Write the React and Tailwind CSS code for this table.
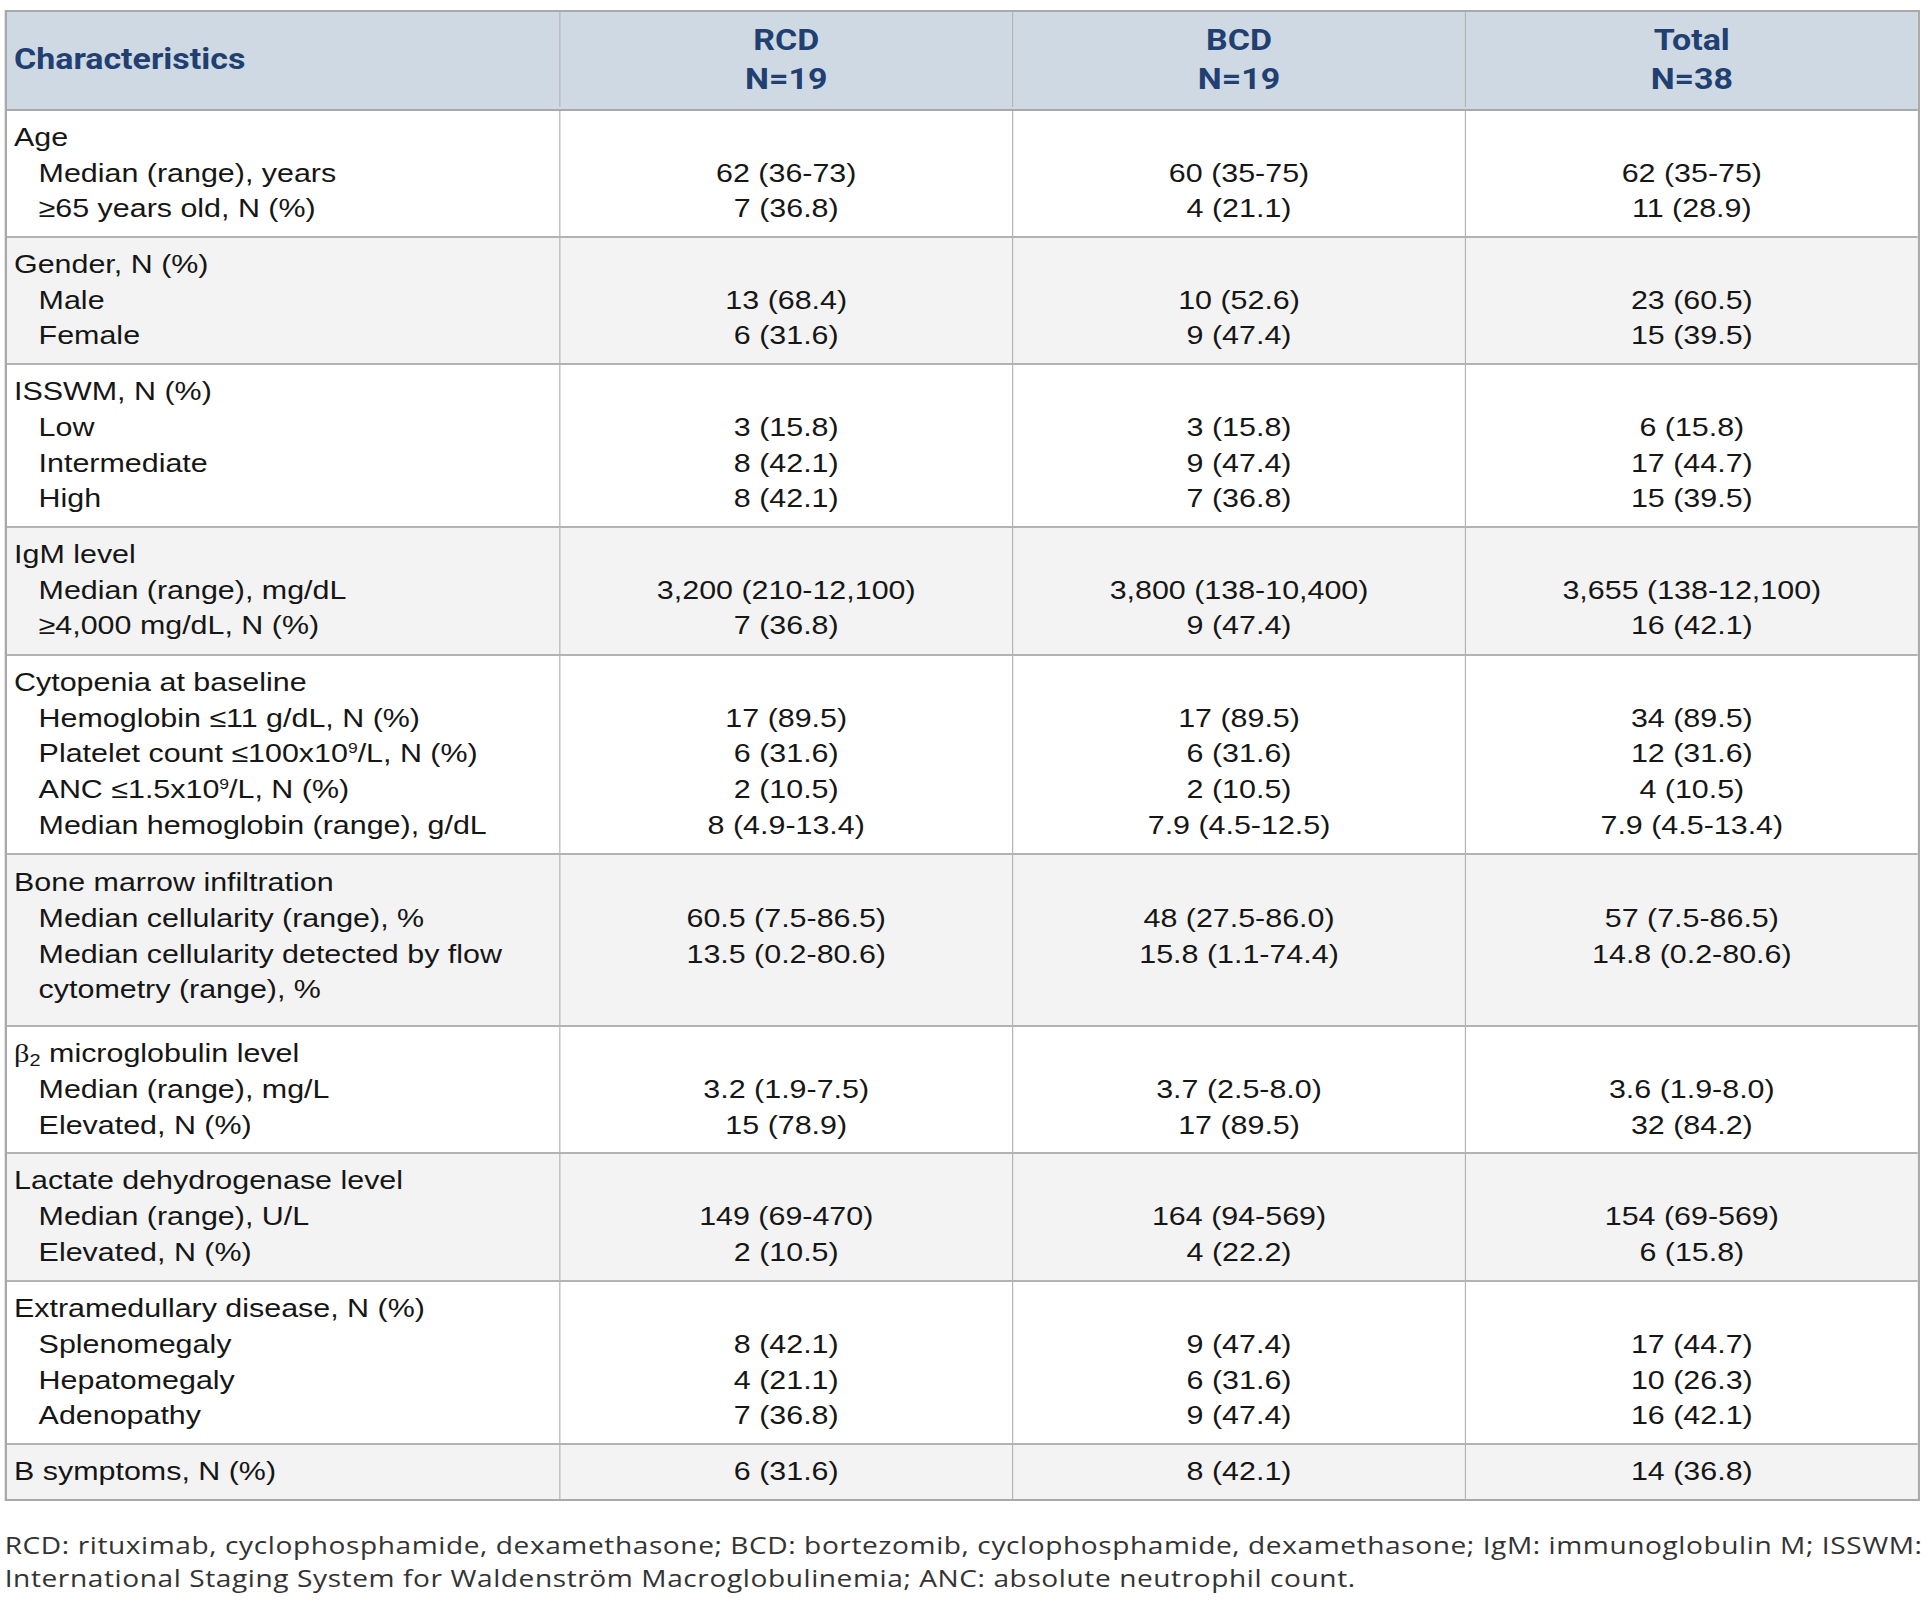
import React from "react";

const sup9 = <sup className="text-[15px] -top-[0.6em]">9</sup>;

const rows = [
  {
    label: "Age",
    sub: [
      ["Median (range), years", "62 (36-73)", "60 (35-75)", "62 (35-75)"],
      ["≥65 years old, N (%)", "7 (36.8)", "4 (21.1)", "11 (28.9)"],
    ],
  },
  {
    label: "Gender, N (%)",
    sub: [
      ["Male", "13 (68.4)", "10 (52.6)", "23 (60.5)"],
      ["Female", "6 (31.6)", "9 (47.4)", "15 (39.5)"],
    ],
  },
  {
    label: "ISSWM, N (%)",
    sub: [
      ["Low", "3 (15.8)", "3 (15.8)", "6 (15.8)"],
      ["Intermediate", "8 (42.1)", "9 (47.4)", "17 (44.7)"],
      ["High", "8 (42.1)", "7 (36.8)", "15 (39.5)"],
    ],
  },
  {
    label: "IgM level",
    big: true,
    sub: [
      ["Median (range), mg/dL", "3,200 (210-12,100)", "3,800 (138-10,400)", "3,655 (138-12,100)"],
      ["≥4,000 mg/dL, N (%)", "7 (36.8)", "9 (47.4)", "16 (42.1)"],
    ],
  },
  {
    label: "Cytopenia at baseline",
    big: true,
    sub: [
      ["Hemoglobin ≤11 g/dL, N (%)", "17 (89.5)", "17 (89.5)", "34 (89.5)"],
      [<>Platelet count ≤100x10{sup9}/L, N (%)</>, "6 (31.6)", "6 (31.6)", "12 (31.6)"],
      [<>ANC ≤1.5x10{sup9}/L, N (%)</>, "2 (10.5)", "2 (10.5)", "4 (10.5)"],
      ["Median hemoglobin (range), g/dL", "8 (4.9-13.4)", "7.9 (4.5-12.5)", "7.9 (4.5-13.4)"],
    ],
  },
  {
    label: "Bone marrow infiltration",
    extra: true,
    sub: [
      ["Median cellularity (range), %", "60.5 (7.5-86.5)", "48 (27.5-86.0)", "57 (7.5-86.5)"],
      ["Median cellularity detected by flow", "13.5 (0.2-80.6)", "15.8 (1.1-74.4)", "14.8 (0.2-80.6)"],
      ["cytometry (range), %", "", "", ""],
    ],
  },
  {
    label: (
      <>
        <span className="font-['Liberation_Serif',serif]">β</span>
        <sub className="text-[17px]">2</sub> microglobulin level
      </>
    ),
    sub: [
      ["Median (range), mg/L", "3.2 (1.9-7.5)", "3.7 (2.5-8.0)", "3.6 (1.9-8.0)"],
      ["Elevated, N (%)", "15 (78.9)", "17 (89.5)", "32 (84.2)"],
    ],
  },
  {
    label: "Lactate dehydrogenase level",
    big: true,
    sub: [
      ["Median (range), U/L", "149 (69-470)", "164 (94-569)", "154 (69-569)"],
      ["Elevated, N (%)", "2 (10.5)", "4 (22.2)", "6 (15.8)"],
    ],
  },
  {
    label: "Extramedullary disease, N (%)",
    sub: [
      ["Splenomegaly", "8 (42.1)", "9 (47.4)", "17 (44.7)"],
      ["Hepatomegaly", "4 (21.1)", "6 (31.6)", "10 (26.3)"],
      ["Adenopathy", "7 (36.8)", "9 (47.4)", "16 (42.1)"],
    ],
  },
  {
    label: "B symptoms, N (%)",
    values: ["6 (31.6)", "8 (42.1)", "14 (36.8)"],
  },
];

function Line({ children }) {
  return <div className="h-[35.7px] leading-[35.7px] whitespace-nowrap">{children}</div>;
}

function BodyRow({ row, index }) {
  const shaded = index % 2 === 1;
  const bg = shaded ? "bg-[#f3f3f3]" : "bg-white";
  const border = index === 0 ? "" : "border-t-2 border-[#b3b3b3]";
  const pad = row.extra ? "pt-[10px] pb-[17px]" : row.big ? "pt-[9px] pb-[10px]" : "py-[9px]";
  return (
    <div className={`grid grid-cols-[472px_387px_387px_1fr] ${bg} ${border}`}>
      <div className={`pl-[6px] ${pad}`}>
        <Line>{row.label}</Line>
        {row.sub &&
          row.sub.map((s, i) => (
            <Line key={i}>
              <span className="pl-[21px]">{s[0]}</span>
            </Line>
          ))}
      </div>
      {[1, 2, 3].map((c) => (
        <div key={c} className={`border-l border-[#b3b3b3] text-center ${pad}`}>
          {row.values ? (
            <Line>{row.values[c - 1]}</Line>
          ) : (
            <>
              <Line />
              {row.sub.map((s, i) => (
                <Line key={i}>{s[c]}</Line>
              ))}
            </>
          )}
        </div>
      ))}
    </div>
  );
}

export default function App() {
  return (
    <div className="w-[1649px] origin-top-left scale-x-[1.17] bg-white pt-[10px] pb-[30px]">
      <div className="ml-[4px] w-[1637px] border-2 border-[#a9a9a9] font-['Liberation_Sans',Arial,sans-serif] text-[26px] text-[#161616]">
        <div className="grid grid-cols-[472px_387px_387px_1fr] h-[99px] pb-[2px] bg-[#cfd9e4] border-b-2 border-[#a9a9a9] font-['Roboto',sans-serif] font-bold text-[29px] leading-[38.5px] text-[#213f70]">
          <div className="flex items-center pl-[6px]">Characteristics</div>
          <div className="flex flex-col items-center justify-center border-l border-[#b3b3b3]">
            <div>RCD</div>
            <div>N=19</div>
          </div>
          <div className="flex flex-col items-center justify-center border-l border-[#b3b3b3]">
            <div>BCD</div>
            <div>N=19</div>
          </div>
          <div className="flex flex-col items-center justify-center border-l border-[#b3b3b3]">
            <div>Total</div>
            <div>N=38</div>
          </div>
        </div>
        {rows.map((row, i) => (
          <BodyRow key={i} row={row} index={i} />
        ))}
      </div>
      <div className="ml-[4px] mt-[27px] font-['Open_Sans',sans-serif] text-[24px] leading-[33px] tracking-[0.5px] text-[#333333]">
        <div className="whitespace-nowrap">
          RCD: rituximab, cyclophosphamide, dexamethasone; BCD: bortezomib, cyclophosphamide, dexamethasone; IgM: immunoglobulin M; ISSWM:
        </div>
        <div className="whitespace-nowrap">
          International Staging System for Waldenström Macroglobulinemia; ANC: absolute neutrophil count.
        </div>
      </div>
    </div>
  );
}
